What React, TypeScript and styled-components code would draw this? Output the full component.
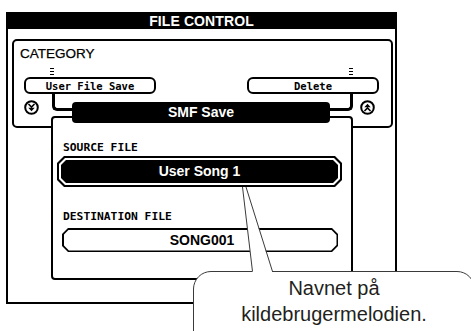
import React from "react";
import styled, { createGlobalStyle } from "styled-components";

const GlobalStyle = createGlobalStyle`
  html, body { margin: 0; padding: 0; background: #fff; }
  * { box-sizing: border-box; }
`;

const octagon = (c: number) => `polygon(${c}px 0, calc(100% - ${c}px) 0, 100% ${c}px, 100% calc(100% - ${c}px), calc(100% - ${c}px) 100%, ${c}px 100%, 0 calc(100% - ${c}px), 0 ${c}px)`;

const Page = styled.div`
  position: relative;
  width: 471px;
  height: 331px;
  overflow: hidden;
  background: #fff;
  padding: 12px 0 0 6px;
`;

const Screen = styled.div`
  width: 391px;
  height: 292px;
  border: 2px solid #000;
  display: flex;
  flex-direction: column;
`;

const ScreenTitle = styled.div`
  height: 15px;
  line-height: 15px;
  background: #000;
  color: #fff;
  text-align: center;
  font-family: "Liberation Sans", Arial, sans-serif;
  font-weight: bold;
  font-size: 14px;
  letter-spacing: 0.1px;
`;

const CategoryPanel = styled.div`
  margin: 10px 2px 0 4px;
  height: 89px;
  border: 2px solid #000;
  border-radius: 5px;
  display: flex;
  flex-direction: column;
`;

const CategoryLabel = styled.div`
  margin: 5px 0 0 6px;
  height: 16px;
  font-family: "Liberation Sans", Arial, sans-serif;
  font-size: 13.5px;
  line-height: 16px;
  color: #000;
  -webkit-text-stroke: 0.25px #000;
`;

const ButtonRow = styled.div`
  display: flex;
  justify-content: space-between;
  margin-top: 6px;
  padding: 0 12px 0 10px;
`;

const ButtonColumn = styled.div`
  display: flex;
  flex-direction: column;
  width: 132px;
`;

const ScrollMark = styled.span<{ $offset: number }>`
  display: block;
  width: 4px;
  height: 7px;
  margin: 0 0 2px ${(p) => p.$offset}px;
  background: repeating-linear-gradient(to bottom, #000 0 1px, transparent 1px 3px);
`;

const LcdButton = styled.div`
  height: 17px;
  border: 2px solid #000;
  border-radius: 6px;
  padding-top: 1px;
  text-align: center;
  font-family: "DejaVu Sans Mono", monospace;
  font-weight: bold;
  font-size: 10.5px;
  line-height: 12px;
  color: #000;
`;

const BottomRow = styled.div`
  display: flex;
  justify-content: space-between;
  padding: 0 16px 0 10px;
`;

const Group = styled.div`
  display: flex;
  align-items: flex-start;
`;

const RoundIcon = styled.svg`
  display: block;
  width: 15px;
  height: 15px;
  margin-top: 6px;
`;

const Connector = styled.div<{ $side: "left" | "right" }>`
  height: 17px;
  width: ${(p) => (p.$side === "left" ? 20 : 23)}px;
  margin: ${(p) => (p.$side === "left" ? "0 0 0 13px" : "0 7px 0 0")};
  border-bottom: 3px solid #000;
  ${(p) =>
    p.$side === "left"
      ? "border-left: 3px solid #000; border-bottom-left-radius: 5px;"
      : "border-right: 3px solid #000; border-bottom-right-radius: 5px;"}
`;

const SmfWindow = styled.div`
  position: relative;
  margin: -26px 0 0 43px;
  width: 302px;
  display: flex;
  flex-direction: column;
`;

const SmfBar = styled.div`
  position: relative;
  z-index: 1;
  margin: 0 23px 0 21px;
  height: 21px;
  line-height: 21px;
  background: #000;
  color: #fff;
  border-radius: 4px;
  text-align: center;
  font-family: "Liberation Sans", Arial, sans-serif;
  font-weight: bold;
  font-size: 14px;
`;

const SmfBody = styled.div`
  margin-top: -7px;
  height: 164px;
  border: 2px solid #000;
  border-radius: 4px;
  background: #fff;
  display: flex;
  flex-direction: column;
`;

const FieldLabel = styled.div`
  margin: 23px 0 0 10px;
  height: 13px;
  font-family: "DejaVu Sans Mono", monospace;
  font-weight: bold;
  font-size: 11.3px;
  line-height: 13px;
  color: #000;
`;

const SourceOuter = styled.div`
  margin: 2px 0 0 4px;
  width: 285px;
  height: 31px;
  padding: 2px;
  background: #000;
  clip-path: ${octagon(7)};
`;

const SourceRing = styled.div`
  height: 100%;
  padding: 2px;
  background: #fff;
  clip-path: ${octagon(6)};
`;

const SourceFill = styled.div`
  height: 100%;
  background: #000;
  clip-path: ${octagon(5)};
  color: #fff;
  text-align: center;
  font-family: "Liberation Sans", Arial, sans-serif;
  font-weight: bold;
  font-size: 14px;
  line-height: 23px;
`;

const DestOuter = styled.div`
  margin: 5px 0 0 9px;
  width: 276px;
  height: 24px;
  padding: 1.5px;
  background: #000;
  clip-path: ${octagon(6)};
`;

const DestFill = styled.div`
  height: 100%;
  background: #fff;
  clip-path: ${octagon(5.4)};
  color: #000;
  text-align: center;
  font-family: "Liberation Sans", Arial, sans-serif;
  font-weight: bold;
  font-size: 14px;
  line-height: 21px;
  padding-left: 4px;
`;

const Callout = styled.div`
  position: absolute;
  left: 193px;
  top: 271px;
  width: 282px;
  height: 90px;
  border: 1px solid #3a3a3a;
  border-radius: 18px;
  background: #fff;
  padding-top: 3px;
  text-align: center;
  font-family: "Liberation Sans", Arial, sans-serif;
  font-size: 20px;
  line-height: 26px;
  color: #231f20;
`;

const Pointer = styled.svg`
  position: absolute;
  left: 0;
  top: 0;
  width: 471px;
  height: 331px;
  pointer-events: none;
`;

const ScrollIcon = ({ dir }: { dir: "up" | "down" }) => (
  <RoundIcon viewBox="0 0 15 15">
    <g transform={dir === "up" ? "rotate(180 7.5 7.5)" : undefined}>
      <circle cx="7.5" cy="7.5" r="6.3" fill="none" stroke="#000" strokeWidth="2" />
      <path d="M4.5 4 L7.5 7 L10.5 4" fill="none" stroke="#000" strokeWidth="1.6" />
      <path d="M4.3 7.8 L10.7 7.8 L7.5 11.3 Z" fill="#000" />
    </g>
  </RoundIcon>
);

export default function App() {
  return (
    <>
      <GlobalStyle />
      <Page>
        <Screen>
          <ScreenTitle>FILE CONTROL</ScreenTitle>
          <CategoryPanel>
            <CategoryLabel>CATEGORY</CategoryLabel>
            <ButtonRow>
              <ButtonColumn>
                <ScrollMark $offset={26} />
                <LcdButton>User File Save</LcdButton>
              </ButtonColumn>
              <ButtonColumn>
                <ScrollMark $offset={102} />
                <LcdButton>Delete</LcdButton>
              </ButtonColumn>
            </ButtonRow>
            <BottomRow>
              <Group>
                <ScrollIcon dir="down" />
                <Connector $side="left" />
              </Group>
              <Group>
                <Connector $side="right" />
                <ScrollIcon dir="up" />
              </Group>
            </BottomRow>
          </CategoryPanel>
          <SmfWindow>
            <SmfBar>SMF Save</SmfBar>
            <SmfBody>
              <FieldLabel>SOURCE FILE</FieldLabel>
              <SourceOuter>
                <SourceRing>
                  <SourceFill>User Song 1</SourceFill>
                </SourceRing>
              </SourceOuter>
              <FieldLabel>DESTINATION FILE</FieldLabel>
              <DestOuter>
                <DestFill>SONG001</DestFill>
              </DestOuter>
            </SmfBody>
          </SmfWindow>
        </Screen>
        <Callout>
          Navnet på
          <br />
          kildebrugermelodien.
        </Callout>
        <Pointer viewBox="0 0 471 331">
          <polygon points="242.5,187 246,187 272.5,273 252.5,273" fill="#fff" />
          <line x1="242.5" y1="187" x2="252.5" y2="271.5" stroke="#3a3a3a" strokeWidth="1" />
          <line x1="246" y1="187" x2="272.5" y2="271.5" stroke="#3a3a3a" strokeWidth="1" />
        </Pointer>
      </Page>
    </>
  );
}
